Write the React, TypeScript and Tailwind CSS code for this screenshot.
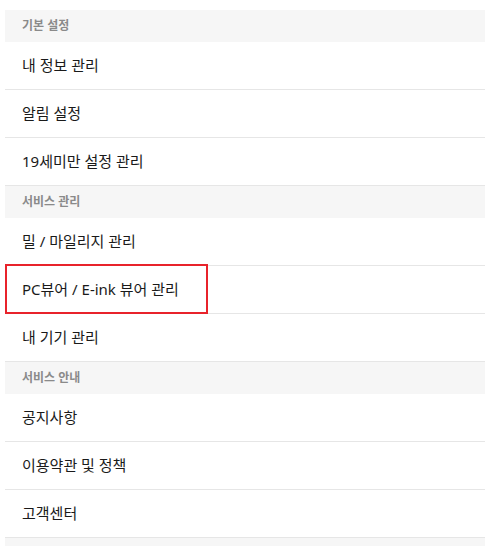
const sections = [
  {
    title: "기본 설정",
    items: ["내 정보 관리", "알림 설정", "19세미만 설정 관리"],
  },
  {
    title: "서비스 관리",
    items: ["밀 / 마일리지 관리", "PC뷰어 / E-ink 뷰어 관리", "내 기기 관리"],
  },
  {
    title: "서비스 안내",
    items: ["공지사항", "이용약관 및 정책", "고객센터"],
  },
];

const HIGHLIGHT = "PC뷰어 / E-ink 뷰어 관리";

export default function App() {
  return (
    <div
      className="bg-white pt-[10px] pl-[5px] min-h-screen"
      style={{ fontFamily: '"Noto Sans", "Noto Sans CJK KR", sans-serif' }}
    >
      {sections.map((section) => (
        <div key={section.title}>
          <div className="h-[32px] bg-[#f6f6f6] flex items-center pl-[17px] text-[12px] font-bold text-[#8a8a8a]">
            {section.title}
          </div>
          {section.items.map((item) => (
            <div
              key={item}
              className="relative h-[48px] border-b border-[#e6e6e6] flex items-center pl-[17px] text-[15px] text-[#1a1a1a]"
            >
              {item}
              {item === HIGHLIGHT && (
                <div className="absolute left-0 top-[-2px] w-[203px] h-[50px] border-2 border-[#e8232b]" />
              )}
            </div>
          ))}
        </div>
      ))}
      <div className="h-[32px] bg-[#f6f6f6]" />
    </div>
  );
}
